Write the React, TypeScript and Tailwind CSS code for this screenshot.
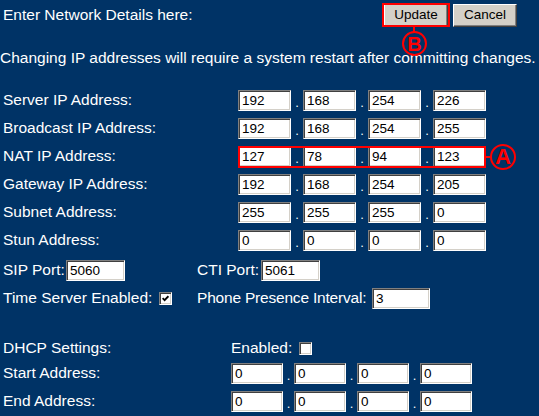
import React from "react";

const inputCls =
  "h-[21px] shrink-0 border border-t-[#808080] border-l-[#808080] border-r-white border-b-white bg-white pl-[3px] text-[13.5px] leading-[15px] text-black outline-none shadow-[inset_1px_1px_0_#404040,inset_-1px_-1px_0_#d4d0c8]";

function Sep({ narrow }: { narrow?: boolean }) {
  return (
    <span
      className={
        narrow
          ? "flex h-[21px] w-[11px] shrink-0 items-end justify-center text-[13px] leading-[16px]"
          : "flex h-[21px] w-[12px] shrink-0 items-end justify-center text-[13px] leading-[16px]"
      }
    >
      .
    </span>
  );
}

function IpFields({ values, narrow }: { values: string[]; narrow?: boolean }) {
  return (
    <div className="flex items-center">
      {values.map((v, i) => (
        <React.Fragment key={i}>
          {i > 0 && <Sep narrow={narrow} />}
          <input
            type="text"
            readOnly
            defaultValue={v}
            className={(narrow ? "w-[52px] " : "w-[53px] ") + inputCls}
          />
        </React.Fragment>
      ))}
    </div>
  );
}

function Checkbox({ checked }: { checked?: boolean }) {
  return (
    <span className="flex h-[13px] w-[13px] shrink-0 items-center justify-center border border-t-[#808080] border-l-[#808080] border-r-white border-b-white bg-white shadow-[inset_1px_1px_0_#404040,inset_-1px_-1px_0_#d4d0c8]">
      {checked && (
        <svg width="7" height="7" viewBox="0 0 7 7">
          <path d="M0.6 3.2 L2.6 5.2 L6.4 1.2" fill="none" stroke="#000" strokeWidth="1.8" />
        </svg>
      )}
    </span>
  );
}

function Btn({ children }: { children: React.ReactNode }) {
  return (
    <button className="flex h-[23px] w-[64px] items-center justify-center border border-t-white border-l-white border-r-[#404040] border-b-[#404040] bg-[#d4d0c8] text-[13.5px] leading-[16px] text-black shadow-[inset_-1px_-1px_0_#808080,inset_1px_1px_0_#d4d0c8]">
      {children}
    </button>
  );
}

function IpRow({ label, values }: { label: string; values: string[] }) {
  return (
    <div className="flex h-[28px] items-center">
      <span className="w-[238px] shrink-0 whitespace-nowrap pl-[3px]">{label}</span>
      <IpFields values={values} />
    </div>
  );
}

export default function App() {
  return (
    <div className="relative h-[416px] w-[539px] overflow-hidden bg-[#003366] text-[15.5px] leading-[18px] text-white [font-family:'Liberation_Sans',Arial,sans-serif]">
      {/* header */}
      <div className="flex h-[30px] items-center">
        <span className="pl-[3px]">Enter Network Details here:</span>
        <div className="ml-auto mr-[22px] flex gap-[5px]">
          <Btn>Update</Btn>
          <Btn>Cancel</Btn>
        </div>
      </div>
      <div className="h-[56px] whitespace-nowrap pt-[19px]">
        Changing IP addresses will require a system restart after committing changes.
      </div>

      <IpRow label="Server IP Address:" values={["192", "168", "254", "226"]} />
      <IpRow label="Broadcast IP Address:" values={["192", "168", "254", "255"]} />
      <IpRow label="NAT IP Address:" values={["127", "78", "94", "123"]} />
      <IpRow label="Gateway IP Address:" values={["192", "168", "254", "205"]} />
      <IpRow label="Subnet Address:" values={["255", "255", "255", "0"]} />
      <IpRow label="Stun Address:" values={["0", "0", "0", "0"]} />

      <div className="mt-[2px] flex h-[28px] items-center whitespace-nowrap">
        <span className="w-[66px] shrink-0 pl-[3px]">SIP Port:</span>
        <input type="text" readOnly defaultValue="5060" className={"w-[59px] " + inputCls} />
        <span className="ml-[72px] w-[64px] shrink-0">CTI Port:</span>
        <input type="text" readOnly defaultValue="5061" className={"w-[59px] " + inputCls} />
      </div>

      <div className="flex h-[28px] items-center whitespace-nowrap">
        <span className="w-[159px] shrink-0 pl-[3px]">Time Server Enabled:</span>
        <Checkbox checked />
        <span className="ml-[25px] w-[175px] shrink-0 tracking-[-0.2px]">Phone Presence Interval:</span>
        <input type="text" readOnly defaultValue="3" className={"w-[58px] " + inputCls} />
      </div>

      <div className="mt-[25px] flex h-[22px] items-center whitespace-nowrap">
        <span className="w-[231px] shrink-0 pl-[3px]">DHCP Settings:</span>
        <span className="w-[68px] shrink-0">Enabled:</span>
        <Checkbox />
      </div>
      <div className="flex h-[28px] items-center whitespace-nowrap">
        <span className="w-[231px] shrink-0 pl-[3px]">Start Address:</span>
        <IpFields values={["0", "0", "0", "0"]} narrow />
      </div>
      <div className="flex h-[28px] items-center whitespace-nowrap">
        <span className="w-[231px] shrink-0 pl-[3px]">End Address:</span>
        <IpFields values={["0", "0", "0", "0"]} narrow />
      </div>

      {/* annotation B */}
      <div className="pointer-events-none absolute left-[382px] top-[3px] h-[24px] w-[68px] border-2 border-[#ff0000]" />
      <div className="pointer-events-none absolute left-[413px] top-[27px] h-[5px] w-[2px] bg-[#ff0000]" />
      <div className="pointer-events-none absolute left-[402px] top-[31px] flex h-[25px] w-[25px] items-center justify-center rounded-full border-2 border-[#ff0000] text-[20px] font-bold leading-none text-[#ff0000]">
        B
      </div>

      {/* annotation A */}
      <div className="pointer-events-none absolute left-[238px] top-[146px] h-[22px] w-[248px] border-2 border-[#ff0000]" />
      <div className="pointer-events-none absolute left-[486px] top-[156px] h-[2px] w-[4px] bg-[#ff0000]" />
      <div className="pointer-events-none absolute left-[490px] top-[144px] flex h-[26px] w-[26px] items-center justify-center rounded-full border-2 border-[#ff0000] text-[22px] font-bold leading-none text-[#ff0000]">
        A
      </div>
    </div>
  );
}
